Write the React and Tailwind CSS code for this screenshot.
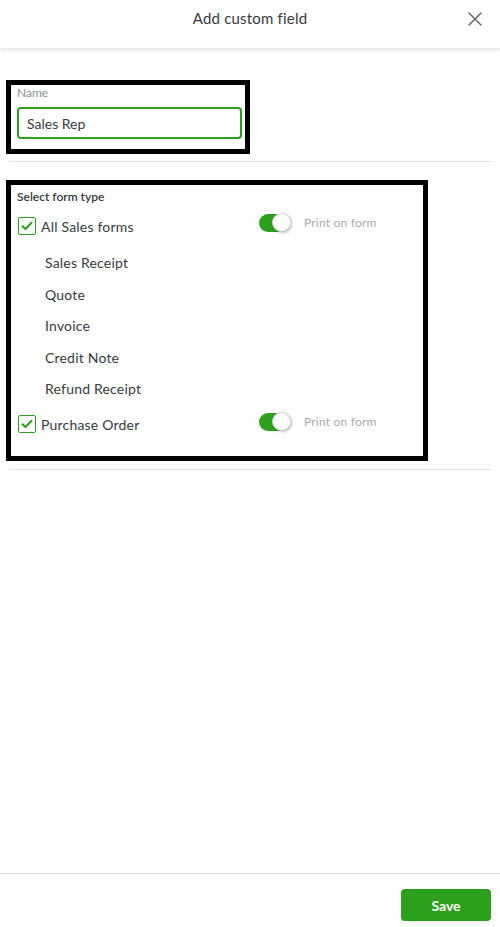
import { useState } from 'react'

const FORM_TYPES = ['Sales Receipt', 'Quote', 'Invoice', 'Credit Note', 'Refund Receipt']

const CheckBox = ({ checked, onChange }) => (
  <button
    onClick={onChange}
    className="w-[18px] h-[18px] border border-[#2ca01c] rounded-[2px] bg-white flex items-center justify-center"
  >
    {checked && (
      <svg width="12" height="10" viewBox="0 0 12 10" fill="none">
        <path d="M1.5 5.2 L4.5 8 L10.5 1.8" stroke="#2ca01c" strokeWidth="2" strokeLinecap="round" strokeLinejoin="round" />
      </svg>
    )}
  </button>
)

const Toggle = ({ on, onChange }) => (
  <button
    onClick={onChange}
    className={`relative w-[31px] h-[18px] rounded-full ${on ? 'bg-[#2ca01c]' : 'bg-[#babec5]'}`}
  >
    <span
      className={`absolute top-[-0.5px] w-[19px] h-[19px] rounded-full bg-white border border-[#d4d7dc] shadow-[1px_1px_3px_rgba(0,0,0,0.25)] ${on ? 'left-[13px]' : 'left-0'}`}
    />
  </button>
)

const CheckRow = ({ label, checked, onCheck, print, onPrint, lift }) => (
  <div className="flex items-center h-[32px]">
    <div className="w-[248px] flex items-center pl-[7px]">
      <CheckBox checked={checked} onChange={onCheck} />
      <span className="ml-[5px] text-[14px] text-[#393a3d] tracking-[0.2px]">{label}</span>
    </div>
    <div className={`flex items-center ${lift}`}>
      <Toggle on={print} onChange={onPrint} />
      <span className="ml-[14px] text-[12px] text-[#a9abaf] tracking-[0.2px]">Print on form</span>
    </div>
  </div>
)

export default function App() {
  const [name, setName] = useState('Sales Rep')
  const [sales, setSales] = useState(true)
  const [salesPrint, setSalesPrint] = useState(true)
  const [po, setPo] = useState(true)
  const [poPrint, setPoPrint] = useState(true)

  return (
    <div className="w-[500px] h-[927px] bg-white flex flex-col font-['Lato',sans-serif] text-[#393a3d]">
      {/* Header */}
      <div className="h-[48px] shadow-[0_2px_4px_rgba(0,0,0,0.12)] relative z-10">
        <div className="h-[37px] flex items-center">
          <div className="w-[48px]" />
          <h1 className="flex-1 text-center text-[15px] text-[#393a3d] tracking-[0.2px]">Add custom field</h1>
          <button className="w-[48px] h-[37px] flex items-center justify-center pr-[2px]">
            <svg width="14" height="14" viewBox="0 0 14 14" fill="none">
              <path d="M1 1 L13 13 M13 1 L1 13" stroke="#6b6c72" strokeWidth="1.6" strokeLinecap="round" />
            </svg>
          </button>
        </div>
      </div>

      <div className="flex-1 flex flex-col">
        {/* Name */}
        <div className="mt-[32px] ml-[6px] w-[244px] border-[5px] border-black pl-[6px] pr-[3px] pb-[10px]">
          <label className="block h-[16px] leading-[16px] text-[12px] text-[#8d9096]">Name</label>
          <input
            autoFocus
            value={name}
            onChange={(e) => setName(e.target.value)}
            className="mt-[6px] w-full h-[32px] border-2 border-[#2ca01c] rounded-[4px] px-[8px] text-[14px] text-[#393a3d] caret-black outline-none"
          />
        </div>

        <div className="mt-[7px] ml-[9px] mr-[9px] h-px bg-[#e3e5e8]" />

        {/* Form types */}
        <div className="mt-[18px] ml-[6px] w-[422px] border-[5px] border-black pt-[4px] pb-[16px]">
          <div className="pl-[6px] h-[16px] leading-[16px] text-[12px] font-semibold text-[#393a3d]">Select form type</div>
          <div className="mt-[5px]">
            <CheckRow
              label="All Sales forms"
              checked={sales}
              onCheck={() => setSales(!sales)}
              print={salesPrint}
              onPrint={() => setSalesPrint(!salesPrint)}
              lift="mb-[7px]"
            />
          </div>
          <div className="mt-[5px]">
            {FORM_TYPES.map((t) => (
              <div key={t} className="h-[31.5px] flex items-center pl-[34px] text-[14px] text-[#393a3d] tracking-[0.2px]">
                {t}
              </div>
            ))}
          </div>
          <div className="mt-[3.5px]">
            <CheckRow
              label="Purchase Order"
              checked={po}
              onCheck={() => setPo(!po)}
              print={poPrint}
              onPrint={() => setPoPrint(!poPrint)}
              lift="mb-[5px]"
            />
          </div>
        </div>

        <div className="mt-[8px] ml-[9px] mr-[9px] h-px bg-[#e3e5e8]" />
      </div>

      {/* Footer */}
      <div className="border-t border-[#dcdee2] pt-[15px] pb-[6px] flex justify-end pr-[9px]">
        <button className="w-[90px] h-[32px] rounded-[4px] bg-[#2ca01c] text-white text-[14px] font-bold">Save</button>
      </div>
    </div>
  )
}
